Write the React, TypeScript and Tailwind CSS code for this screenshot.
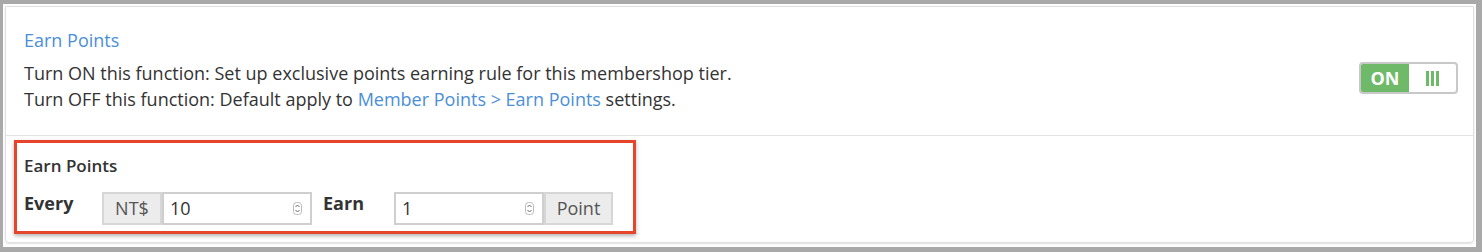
import React from 'react';

const Spinner: React.FC = () => (
  <svg width="9" height="13" viewBox="0 0 9 13" className="shrink-0">
    <rect x="0.5" y="0.5" width="8" height="12" rx="3" fill="#fff" stroke="#bbb" />
    <path d="M2.5 5 L4.5 3 L6.5 5" fill="none" stroke="#666" strokeWidth="1" />
    <path d="M2.5 8 L4.5 10 L6.5 8" fill="none" stroke="#666" strokeWidth="1" />
  </svg>
);

const NumberBox: React.FC<{ value: string }> = ({ value }) => (
  <div className="w-[150px] h-[33px] border-2 border-[#cfcfcf] bg-white flex items-center justify-between pl-[6px] pr-[8px] text-[18px] text-[#333]">
    <span>{value}</span>
    <Spinner />
  </div>
);

const Addon: React.FC<{ label: string; width: string }> = ({ label, width }) => (
  <div className={`${width} h-[33px] border-2 border-[#d6d6d6] bg-[#ececec] flex items-center justify-center text-[18px] text-[#555]`}>
    {label}
  </div>
);

const Toggle: React.FC = () => (
  <div className="w-[99px] h-[32px] border-2 border-[#c8c8c8] rounded-[4px] flex overflow-hidden bg-white">
    <div className="w-[48px] bg-[#6fba68] flex items-center justify-center text-white font-bold text-[18px]">ON</div>
    <div className="flex-1 flex items-center justify-center gap-[2px]">
      <span className="w-[3px] h-[15px] bg-[#6fba68]" />
      <span className="w-[3px] h-[15px] bg-[#6fba68]" />
      <span className="w-[3px] h-[15px] bg-[#6fba68]" />
    </div>
  </div>
);

export default function App() {
  return (
    <div
      className="w-[1482px] h-[252px] bg-[#a9a9a9] pt-[4px] pl-[3px] pr-[6px] pb-[5px]"
      style={{ fontFamily: '"Open Sans", "Noto Sans", sans-serif' }}
    >
      <div className="h-full bg-white p-[2px] pb-[4px]">
        <div className="h-full border border-[#e0e0e0] rounded-b-[4px] shadow-[0_1px_2px_rgba(0,0,0,0.12)] flex flex-col">
          <div className="h-[129px] border-b border-[#e3e3e3] flex justify-between pl-[18px] pr-[15px] pt-[21px]">
            <div>
              <div className="text-[18px] leading-[24px] text-[#4a8fd8]">Earn Points</div>
              <div className="mt-[8px] text-[18px] leading-[26px] text-[#333]">
                <div>Turn ON this function: Set up exclusive points earning rule for this membershop tier.</div>
                <div>
                  Turn OFF this function: Default apply to{' '}
                  <span className="text-[#4a8fd8]">Member Points &gt; Earn Points</span> settings.
                </div>
              </div>
            </div>
            <div className="mt-[34px]">
              <Toggle />
            </div>
          </div>
          <div className="pl-[8px] pt-[4px]">
            <div className="w-[622px] border-[3px] border-[#e6452c] shadow-[0_2px_4px_rgba(0,0,0,0.3)] pl-[7px] pt-[12px] pb-[6px]">
              <div className="text-[17px] leading-[22px] font-semibold text-[#333]">Earn Points</div>
              <div className="mt-[15px] flex items-start">
                <div className="w-[78px] text-[18px] leading-[22px] font-bold text-[#333]">Every</div>
                <Addon label="NT$" width="w-[60px]" />
                <NumberBox value="10" />
                <div className="w-[82px] pl-[11px] text-[18px] leading-[22px] font-bold text-[#333]">Earn</div>
                <NumberBox value="1" />
                <Addon label="Point" width="w-[69px]" />
              </div>
            </div>
          </div>
        </div>
      </div>
    </div>
  );
}
